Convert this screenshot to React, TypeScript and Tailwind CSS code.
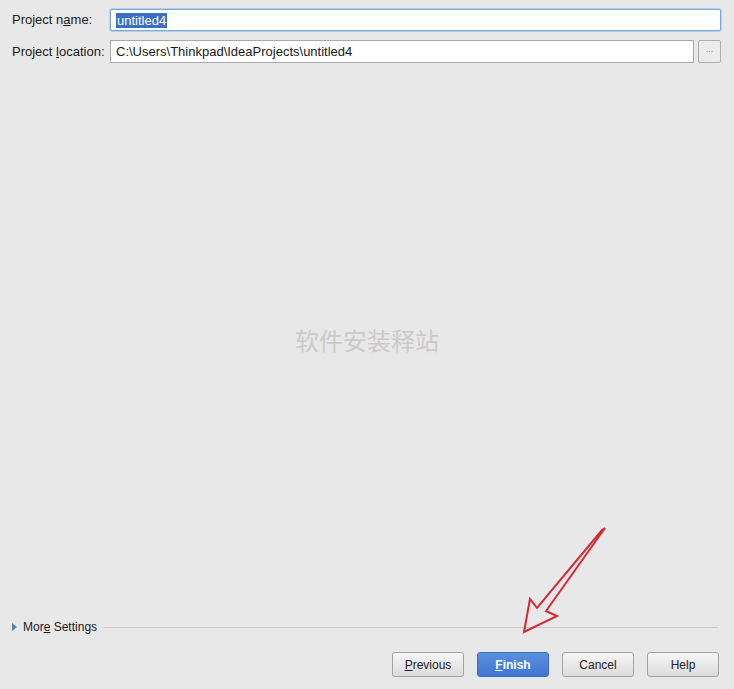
import React from "react";

const font = { fontFamily: '"Liberation Sans", Arial, "Noto Sans CJK SC", sans-serif' };

function Btn({ children, primary = false }: { children: React.ReactNode; primary?: boolean }) {
  return (
    <button
      className={
        primary
          ? "h-[25px] w-[72px] rounded-[3px] border border-[#3b6fc4] bg-gradient-to-b from-[#5b8fdf] to-[#3f75d2] text-[12px] font-bold text-white"
          : "h-[25px] w-[72px] rounded-[3px] border border-[#a3a3a3] bg-gradient-to-b from-[#f6f6f6] to-[#dcdcdc] text-[12px] text-[#222]"
      }
    >
      {children}
    </button>
  );
}

export default function App() {
  return (
    <div className="relative flex h-[689px] w-[734px] flex-col bg-[#e9e8e9] text-[12px] text-[#1a1a1a]" style={font}>
      {/* form */}
      <div className="flex flex-col gap-[9px] pl-[12px] pr-[13px] pt-[9px] text-[13px]">
        <div className="flex items-center">
          <span className="w-[98px]">
            Project n<span className="underline">a</span>me:
          </span>
          <div className="flex h-[22px] flex-1 items-center rounded-[2px] border border-[#7fa7d6] bg-white px-[5px] shadow-[0_0_0_1px_#b5cfee]">
            <span className="bg-[#3d6fc1] px-[1px] leading-[15px] text-white">untitled4</span>
          </div>
        </div>
        <div className="flex items-center">
          <span className="w-[98px]">
            Project <span className="underline">l</span>ocation:
          </span>
          <div className="flex h-[23px] flex-1 items-center border border-[#a9a9a9] bg-white px-[5px]">
            C:\Users\Thinkpad\IdeaProjects\untitled4
          </div>
          <button className="ml-[4px] flex h-[23px] w-[23px] items-center justify-center rounded-[2px] border border-[#adadad] bg-[#ececec] pb-[3px] text-[9px] text-[#777]">
            ...
          </button>
        </div>
      </div>

      {/* watermark */}
      <div className="flex flex-1 items-center justify-center pb-[22px] pt-[20px]">
        <span className="text-[24px] text-[#cbcaca]" style={{ fontFamily: '"Noto Sans CJK SC", sans-serif' }}>
          软件安装释站
        </span>
      </div>

      {/* more settings */}
      <div className="flex items-center pl-[12px] pr-[16px]">
        <span className="mr-[6px] h-0 w-0 border-y-[4px] border-l-[5px] border-y-transparent border-l-[#5c7fa8]" />
        <span>
          Mor<span className="underline">e</span> Settings
        </span>
        <div className="ml-[5px] h-px flex-1 bg-[#c8c8c8]" />
      </div>

      {/* buttons */}
      <div className="flex justify-end gap-[13px] pb-[12px] pr-[15px] pt-[16px]">
        <Btn>
          <span className="underline">P</span>revious
        </Btn>
        <Btn primary>
          <span className="underline">F</span>inish
        </Btn>
        <Btn>Cancel</Btn>
        <Btn>Help</Btn>
      </div>

      {/* red annotation arrow */}
      <svg className="pointer-events-none absolute left-0 top-0" width="734" height="689">
        <polygon
          points="605,528 546,611 557,616 524,632 530,599 537,608 602,530"
          fill="none"
          stroke="#d42a35"
          strokeWidth="2"
          strokeLinejoin="miter"
        />
      </svg>
    </div>
  );
}
